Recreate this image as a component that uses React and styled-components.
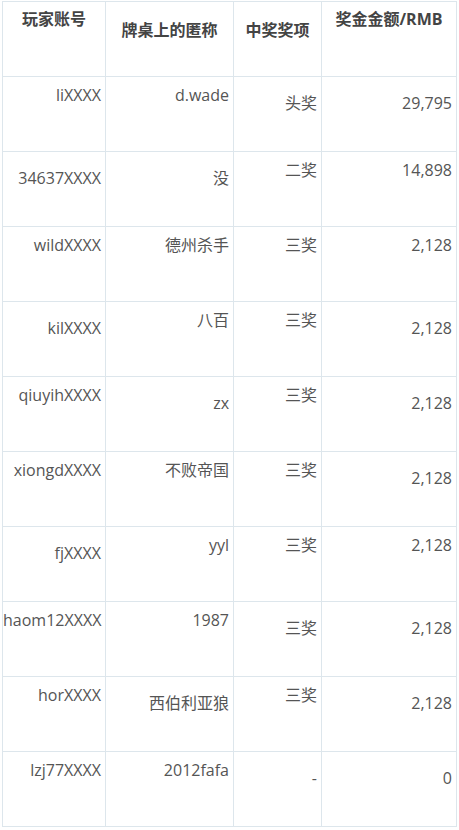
import React from "react";
import styled, { createGlobalStyle } from "styled-components";

const GlobalStyle = createGlobalStyle`
  html, body {
    margin: 0;
    padding: 0;
    background: #fff;
  }
  body {
    font-family: "Open Sans", "Noto Sans CJK SC", sans-serif;
  }
`;

const Page = styled.div`
  padding: 1px 0 0 2px;
`;

const Grid = styled.div`
  display: grid;
  grid-template-columns: 103px 128px 88px 135px;
  width: 455px;
  box-sizing: border-box;
  border-top: 1px solid #dde6ec;
  border-left: 1px solid #dde6ec;
`;

const HeadCell = styled.div`
  box-sizing: border-box;
  height: 75px;
  border-right: 1px solid #dde6ec;
  border-bottom: 1px solid #dde6ec;
  padding-top: ${(p) => (p.low ? 17 : 6)}px;
  text-align: center;
  font-size: 16px;
  line-height: 22px;
  font-weight: 700;
  color: #444;
  white-space: nowrap;
`;

const Cell = styled.div`
  box-sizing: border-box;
  height: 75px;
  border-right: 1px solid #dde6ec;
  border-bottom: 1px solid #dde6ec;
  padding: ${(p) => (p.low ? 15 : 7)}px 4px 0 0;
  text-align: right;
  font-size: 16px;
  line-height: 22px;
  color: #555;
  white-space: nowrap;
`;

const headers = [
  ["玩家账号", false],
  ["牌桌上的匿称", true],
  ["中奖奖项", true],
  ["奖金金额/RMB", false],
];

// each cell: [text, sitsLower]
const rows = [
  [["liXXXX", 0], ["d.wade", 0], ["头奖", 1], ["29,795", 1]],
  [["34637XXXX", 1], ["没", 1], ["二奖", 0], ["14,898", 0]],
  [["wildXXXX", 0], ["德州杀手", 0], ["三奖", 0], ["2,128", 0]],
  [["kilXXXX", 1], ["八百", 0], ["三奖", 0], ["2,128", 1]],
  [["qiuyihXXXX", 0], ["zx", 1], ["三奖", 0], ["2,128", 1]],
  [["xiongdXXXX", 0], ["不败帝国", 0], ["三奖", 0], ["2,128", 1]],
  [["fjXXXX", 1], ["yyl", 0], ["三奖", 0], ["2,128", 0]],
  [["haom12XXXX", 0], ["1987", 0], ["三奖", 1], ["2,128", 1]],
  [["horXXXX", 0], ["西伯利亚狼", 1], ["三奖", 0], ["2,128", 1]],
  [["lzj77XXXX", 0], ["2012fafa", 0], ["-", 1], ["0", 1]],
];

export default function App() {
  return (
    <Page>
      <GlobalStyle />
      <Grid>
        {headers.map(([label, low]) => (
          <HeadCell key={label} low={low ? 1 : 0}>
            {label}
          </HeadCell>
        ))}
        {rows.map((row, i) =>
          row.map(([text, low], j) => (
            <Cell key={`${i}-${j}`} low={low}>
              {text}
            </Cell>
          ))
        )}
      </Grid>
    </Page>
  );
}
